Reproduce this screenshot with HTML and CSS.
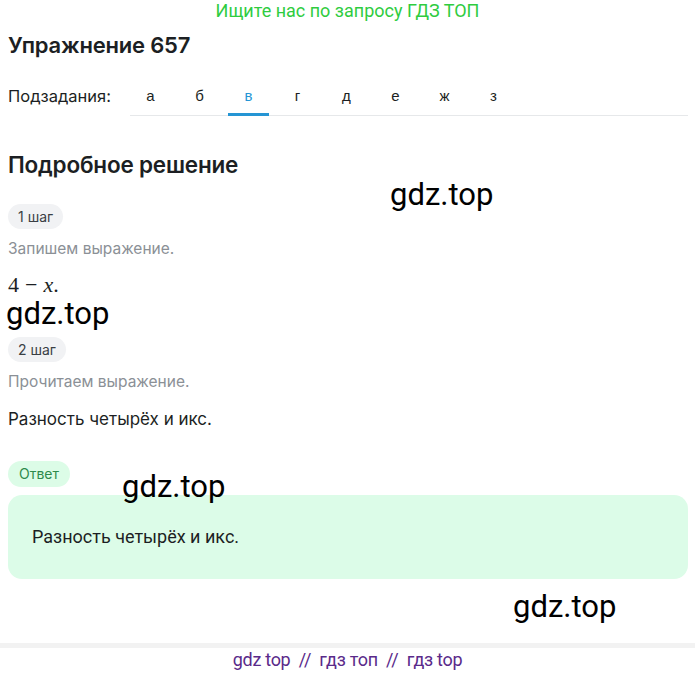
FILE: index.html
```html
<!DOCTYPE html>
<html lang="ru">
<head>
  <meta charset="UTF-8" />
  <title>Упражнение 657 | ГДЗ ТОП</title>
  <meta name="viewport" content="width=device-width, initial-scale=1.0" />
  <link rel="stylesheet" href="styles.css">
</head>
<body>

  <div class="promo">Ищите нас по запросу ГДЗ ТОП</div>

  <div class="page">
    <h1>Упражнение 657</h1>

    <!-- Subtasks -->
    <div class="subtasks">
      <span class="subtasks-label">Подзадания:</span>
      <div class="tabs">
        <a href="#">а</a>
        <a href="#">б</a>
        <a href="#" class="active">в</a>
        <a href="#">г</a>
        <a href="#">д</a>
        <a href="#">е</a>
        <a href="#">ж</a>
        <a href="#">з</a>
      </div>
    </div>

    <h2>Подробное решение</h2>

    <div class="step step-first">
      <span class="pill">1 шаг</span>
      <p class="hint">Запишем выражение.</p>
      <p class="math">4<span class="op">−</span><i>x</i>.</p>
    </div>

    <div class="step step-second">
      <span class="pill">2 шаг</span>
      <p class="hint">Прочитаем выражение.</p>
      <p class="text">Разность четырёх и икс.</p>
    </div>

    <div class="step answer">
      <span class="pill pill-green">Ответ</span>
      <div class="answer-box">Разность четырёх и икс.</div>
    </div>

    <span class="mark mark-1">gdz.top</span>
    <span class="mark mark-2">gdz.top</span>
    <span class="mark mark-3">gdz.top</span>
    <span class="mark mark-4">gdz.top</span>
  </div>

  <div class="footer">gdz top &nbsp;//&nbsp; гдз топ &nbsp;//&nbsp; гдз top</div>

</body>
</html>
```

FILE: styles.css
```css
* { box-sizing: border-box; margin: 0; padding: 0; }

body {
  font-family: 'Inter', 'Roboto', sans-serif;
  background: #fff;
  color: #1c1f23;
}

.promo {
  font-family: 'Roboto', sans-serif;
  font-size: 18px;
  color: #2fcc3f;
  text-align: center;
  height: 22px;
  line-height: 22px;
}

.page {
  position: relative;
  padding: 9px 7px 0 8px;
  height: 621px;
}

h1 {
  font-size: 22px;
  font-weight: 600;
  line-height: 28px;
  letter-spacing: -0.2px;
}

.subtasks {
  display: flex;
  align-items: flex-end;
  margin-top: 27px;
}

.subtasks-label {
  font-size: 16.5px;
  width: 122px;
  line-height: 20px;
  padding-bottom: 10px;
}

.tabs {
  flex: 1;
  display: flex;
  gap: 8px;
  border-bottom: 1px solid #e6e8ea;
}

.tabs a {
  width: 41px;
  text-align: center;
  font-family: 'Liberation Sans', sans-serif;
  font-size: 15px;
  color: #1c1f23;
  text-decoration: none;
  line-height: 20px;
  padding-bottom: 7px;
  border-bottom: 3px solid transparent;
  margin-bottom: -1px;
}

.tabs a.active {
  color: #2595d4;
  border-bottom-color: #2595d4;
}

h2 {
  font-size: 22.5px;
  font-weight: 600;
  line-height: 28px;
  margin-top: 35px;
  letter-spacing: -0.2px;
}

.step {
  display: flex;
  flex-direction: column;
  align-items: flex-start;
}

.step-first { margin-top: 25px; }
.step-second { margin-top: 39px; }

.pill {
  background: #f1f2f4;
  color: #3a3f44;
  font-size: 14px;
  line-height: 25px;
  padding: 0 10px;
  border-radius: 13px;
}

.hint {
  color: #8b9096;
  font-size: 15.5px;
  line-height: 20px;
  margin-top: 10px;
}

.math {
  font-family: 'Liberation Serif', serif;
  font-size: 22px;
  line-height: 26px;
  margin-top: 13px;
}

.math .op {
  margin: 0 6px;
}

.text {
  font-size: 17px;
  line-height: 22px;
  margin-top: 16px;
}

.answer {
  margin-top: 31px;
  align-items: stretch;
}

.pill-green {
  align-self: flex-start;
  background: #dcfce7;
  color: #2e8a4b;
  padding: 0 11px;
  line-height: 26px;
}

.answer-box {
  margin-top: 8px;
  background: #dcfce8;
  border-radius: 14px;
  height: 84px;
  padding: 31px 24px;
  font-family: 'Roboto', sans-serif;
  font-size: 18px;
  line-height: 22px;
}

.mark {
  position: absolute;
  font-family: 'Roboto', sans-serif;
  font-size: 31px;
  color: #000;
  line-height: 1;
}

.mark-1 { left: 390px; top: 157px; }
.mark-2 { left: 6px; top: 276px; }
.mark-3 { left: 122px; top: 449px; }
.mark-4 { left: 513px; top: 569px; }

.footer {
  border-top: 5px solid #f2f2f2;
  font-family: 'Roboto', sans-serif;
  font-size: 18px;
  line-height: 20px;
  color: #5a2a8a;
  text-align: center;
  padding-top: 2px;
  letter-spacing: -0.3px;
}
```
